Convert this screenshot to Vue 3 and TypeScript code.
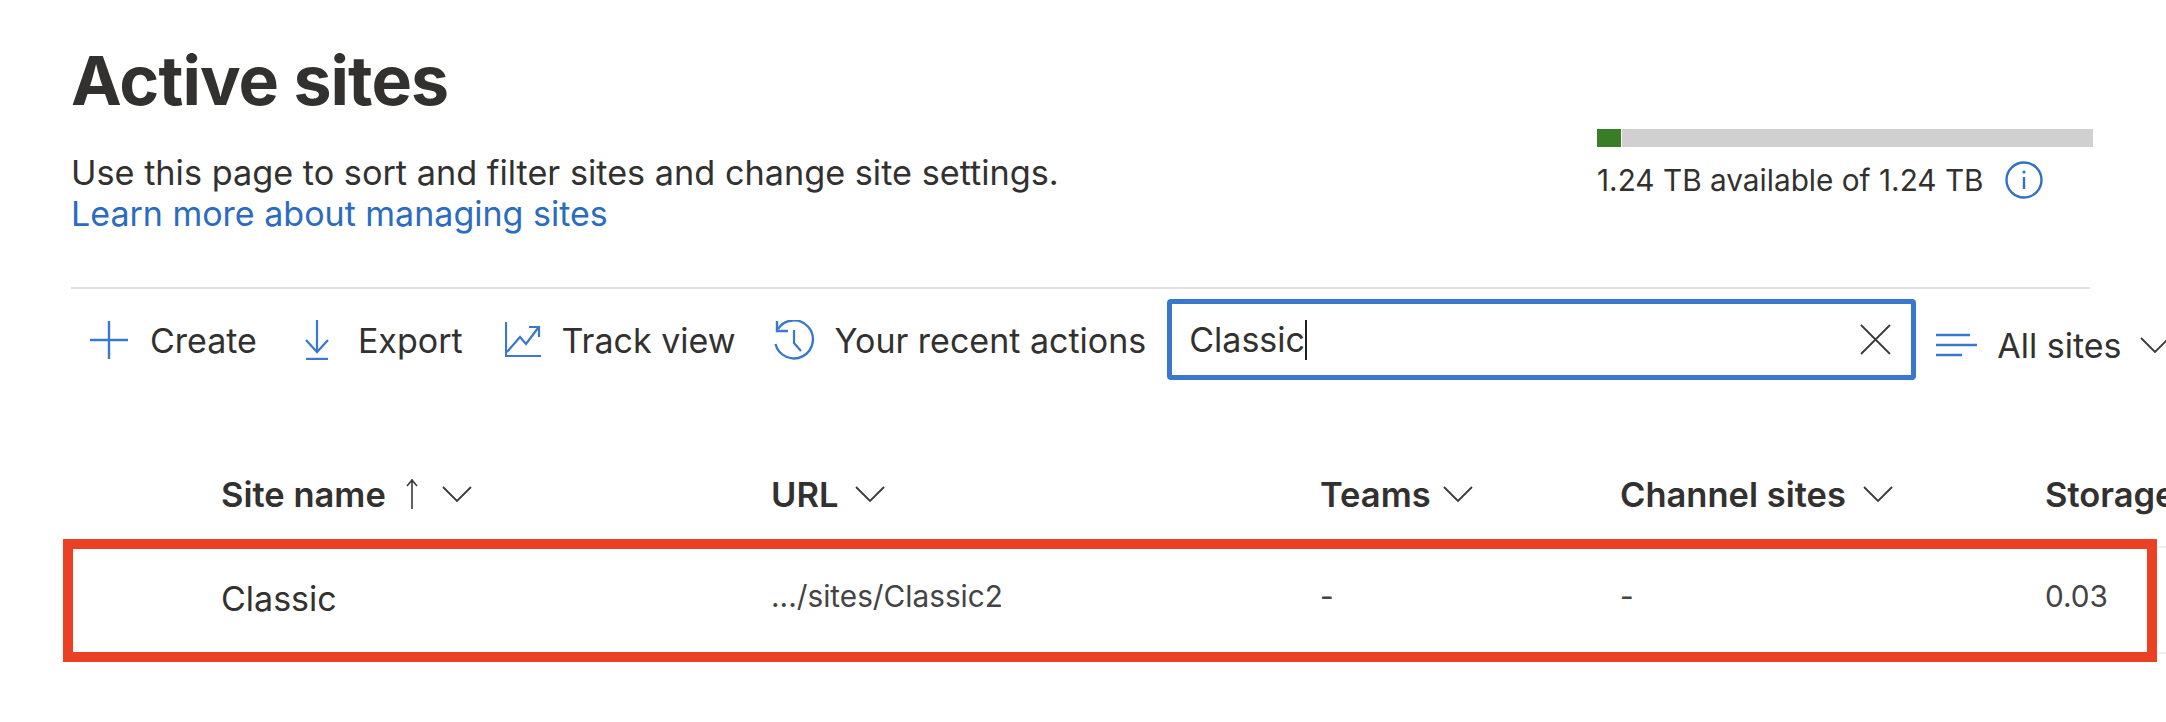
<template>
  <div class="page">
    <header class="top">
      <div class="intro">
        <h1>Active sites</h1>
        <p>Use this page to sort and filter sites and change site settings.</p>
        <a class="learn" href="#">Learn more about managing sites</a>
      </div>
      <div class="usage">
        <div class="bar">
          <span class="used"></span>
          <span class="free"></span>
        </div>
        <div class="usage-text">
          <span>1.24 TB available of 1.24 TB</span>
          <svg class="info" width="38" height="38" viewBox="0 0 38 38" fill="none" stroke="#2f72c4">
            <circle cx="19" cy="19" r="17.500" stroke-width="2.400" />
            <path d="M19 16v12" stroke-width="2.400" />
            <circle cx="19" cy="11" r="1.600" fill="#2f72c4" stroke="none" />
          </svg>
        </div>
      </div>
    </header>

    <div class="divider"></div>

    <div class="toolbar">
      <button class="cmd create">
        <svg width="38" height="38" viewBox="0 0 38 38" stroke="#3a78cf" stroke-width="2.400" fill="none">
          <path d="M19 0v38M0 19h38" />
        </svg>
        <span>Create</span>
      </button>
      <button class="cmd export">
        <svg width="24" height="40" viewBox="0 0 24 40" stroke="#3a78cf" stroke-width="2.200" fill="none">
          <path d="M12 0v32M1 20l11 12 11-12" />
          <path d="M1 39h22" stroke-width="2.400" />
        </svg>
        <span>Export</span>
      </button>
      <button class="cmd track">
        <svg width="36" height="36" viewBox="0 0 36 36" stroke="#3a78cf" stroke-width="2.200" fill="none">
          <path d="M1 0v34h35" />
          <path d="M2 30l13-15 6 7 12-16" />
          <path d="M24 5h10v10" />
        </svg>
        <span>Track view</span>
      </button>
      <button class="cmd recent">
        <svg width="42" height="40" viewBox="0 0 42 40" stroke="#3a78cf" stroke-width="2.400" fill="none">
          <path d="M5 9A19 19 0 1 1 2.500 24" />
          <path d="M4 1v10h11" />
          <path d="M21 10v13l7 8" stroke-width="2.200" />
        </svg>
        <span>Your recent actions</span>
      </button>
      <div class="search">
        <span class="query">{{ query }}</span>
        <span class="caret"></span>
        <svg class="clear" width="31" height="31" viewBox="0 0 31 31" stroke="#3b3a39" stroke-width="1.800" fill="none">
          <path d="M1 1l29 29M30 1L1 30" />
        </svg>
      </div>
      <button class="cmd view">
        <svg width="42" height="24" viewBox="0 0 42 24" stroke="#3a78cf" stroke-width="2.400" fill="none">
          <path d="M0 2h34M0 12h41M0 22h26" />
        </svg>
        <span>All sites</span>
        <svg class="chev" width="30" height="16" viewBox="0 0 30 16" stroke="#3b3a39" stroke-width="1.800" fill="none">
          <path d="M1 1l14 14L29 1" />
        </svg>
      </button>
    </div>

    <div class="table">
      <div class="thead">
        <div class="th" v-for="col in columns" :key="col.label">
          <span>{{ col.label }}</span>
          <svg v-if="col.sorted" class="sort" width="12" height="30" viewBox="0 0 12 30" stroke="#3b3a39" stroke-width="1.600" fill="none">
            <path d="M6 0v30M1 7l5-6 5 6" />
          </svg>
          <svg v-if="col.menu" class="chev" width="30" height="16" viewBox="0 0 30 16" stroke="#3b3a39" stroke-width="1.800" fill="none">
            <path d="M1 1l14 14L29 1" />
          </svg>
        </div>
      </div>
      <div class="row">
        <div class="cell name">Classic</div>
        <div class="cell">.../sites/Classic2</div>
        <div class="cell">-</div>
        <div class="cell">-</div>
        <div class="cell">0.03</div>
        <div class="highlight"></div>
      </div>
    </div>
  </div>
</template>

<script setup lang="ts">
import { ref } from 'vue'

interface Column {
  label: string
  sorted?: boolean
  menu: boolean
}

const query = ref<string>('Classic')

const columns: Column[] = [
  { label: 'Site name', sorted: true, menu: true },
  { label: 'URL', menu: true },
  { label: 'Teams', menu: true },
  { label: 'Channel sites', menu: true },
  { label: 'Storage', menu: false },
]
</script>

<style scoped>
.page {
  width: 2166px;
  height: 722px;
  overflow: hidden;
  background: #fff;
  color: #323130;
  font-family: Inter, "Liberation Sans", sans-serif;
}
.top {
  display: flex;
  justify-content: space-between;
  padding: 0 73px 0 71px;
  height: 287px;
}
h1 {
  margin: 0;
  padding-top: 40px;
  font-size: 68px;
  line-height: 80px;
  font-weight: 700;
  letter-spacing: -0.9px;
}
.intro p {
  margin: 32px 0 0;
  font-size: 34.250px;
  line-height: 41px;
}
.learn {
  display: block;
  font-size: 34px;
  line-height: 41px;
  color: #2b6cc0;
  text-decoration: none;
}
.usage {
  width: 496px;
  padding-top: 129px;
}
.bar {
  display: flex;
  gap: 1px;
  height: 18px;
}
.used { width: 24px; background: #3a7d27; }
.free { flex: 1; background: #d0d0d0; }
.usage-text {
  display: flex;
  align-items: center;
  gap: 21px;
  margin-top: 14px;
  font-size: 29.750px;
  line-height: 38px;
}
.info { flex: none; }
.divider {
  width: 2019px;
  height: 2px;
  margin-left: 71px;
  background: #e1e1e1;
}
.toolbar {
  display: flex;
  align-items: center;
  padding-left: 90px;
  margin-top: 10px;
  height: 81px;
}
.cmd {
  display: flex;
  align-items: center;
  flex: none;
  padding: 2px 0 0;
  border: 0;
  background: none;
  color: inherit;
  font: inherit;
  font-size: 34px;
  line-height: 40px;
}
.cmd svg { margin-top: -2px; }
.create { gap: 22px; margin-right: 48px; }
.export { gap: 29px; margin-right: 42px; }
.track { gap: 21px; margin-right: 37px; }
.recent { gap: 20px; margin-right: 21px; }
.search {
  display: flex;
  align-items: center;
  box-sizing: border-box;
  flex: none;
  width: 749px;
  height: 81px;
  padding: 0 20px 0 17px;
  border: 5px solid #3a78cf;
  border-radius: 4px;
  font-size: 34px;
}
.caret {
  width: 2px;
  height: 40px;
  background: #201f1e;
}
.clear { margin-left: auto; }
.view {
  gap: 19px;
  margin-left: 20px;
  padding-top: 12px;
}
.table { margin-top: 94px; }
.thead,
.row {
  display: grid;
  grid-template-columns: 550px 549px 300px 425px 1fr;
}
.thead { height: 72px; padding-left: 221px; }
.th {
  display: flex;
  align-items: center;
  height: 40px;
  gap: 17px;
  font-size: 34.500px;
  font-weight: 600;
  white-space: nowrap;
}
.th:nth-child(3) { gap: 12px; }
.sort { margin-left: 3px; margin-right: 7px; }
.row {
  position: relative;
  align-items: center;
  height: 108px;
  box-sizing: border-box;
  margin-left: 71px;
  padding: 0 0 8px 150px;
  border-top: 2px solid #f0f0f0;
  border-bottom: 2px solid #f0f0f0;
  font-size: 29.750px;
  color: #444;
}
.cell { line-height: 40px; }
.name {
  margin-top: 5px;
  font-size: 34px;
  color: #323130;
}
.highlight {
  position: absolute;
  left: -8px;
  top: -9px;
  box-sizing: border-box;
  width: 2094px;
  height: 123px;
  border: 10px solid #ea4125;
}
</style>
